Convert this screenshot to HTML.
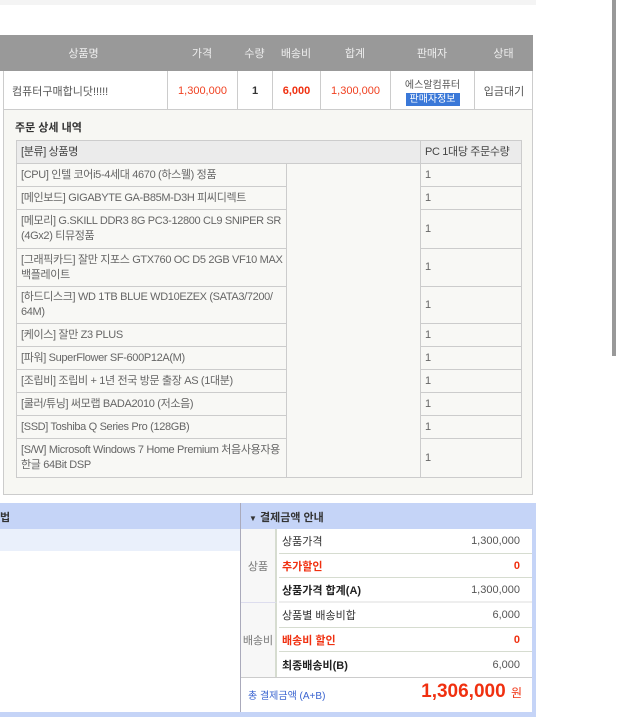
<!DOCTYPE html><html><head><meta charset="utf-8"><style>
*{margin:0;padding:0;box-sizing:border-box}
body{width:620px;height:724px;background:#fff;font-family:"Liberation Sans","Noto Sans CJK KR",sans-serif;position:relative;overflow:hidden;font-size:11px;color:#555}
.a{position:absolute}
.c{display:flex;align-items:center;justify-content:center;text-align:center}
.l{display:flex;align-items:center;padding-left:4px}
.hd{color:#eee;font-size:11px}
.cell{border:1px solid #ccc;background:#f8f8f5;color:#666;line-height:15px;letter-spacing:-0.35px}
</style></head><body>
<div class="a" style="left:0;top:0;width:536px;height:5px;background:#f4f4f4"></div>
<div class="a" style="left:612px;top:0;width:4px;height:356px;background:#999"></div>

<div class="a" style="left:0;top:35px;width:533px;height:36px;background:#999"></div>
<div class="a c hd" style="left:0;top:35px;width:167px;height:36px">상품명</div>
<div class="a c hd" style="left:167px;top:35px;width:70px;height:36px">가격</div>
<div class="a c hd" style="left:237px;top:35px;width:35px;height:36px">수량</div>
<div class="a c hd" style="left:272px;top:35px;width:48px;height:36px">배송비</div>
<div class="a c hd" style="left:320px;top:35px;width:70px;height:36px">합계</div>
<div class="a c hd" style="left:390px;top:35px;width:84px;height:36px">판매자</div>
<div class="a c hd" style="left:474px;top:35px;width:59px;height:36px">상태</div>

<div class="a" style="left:3px;top:71px;width:530px;height:39px;border-right:1px solid #ccc;border-bottom:1px solid #ccc;border-left:1px solid #ccc"></div>
<div class="a l" style="left:8px;top:71px;width:159px;height:39px;color:#555;padding-left:4px">컴퓨터구매합니닷!!!!!</div>
<div class="a c" style="left:167px;top:71px;width:70px;height:39px;border-left:1px solid #ccc;color:#f04020">1,300,000</div>
<div class="a c" style="left:237px;top:71px;width:35px;height:39px;border-left:1px solid #ccc;color:#333;font-weight:bold">1</div>
<div class="a c" style="left:272px;top:71px;width:48px;height:39px;border-left:1px solid #ccc;color:#f03010;font-weight:bold">6,000</div>
<div class="a c" style="left:320px;top:71px;width:70px;height:39px;border-left:1px solid #ccc;color:#f04020">1,300,000</div>
<div class="a" style="left:390px;top:71px;width:84px;height:39px;border-left:1px solid #ccc;text-align:center;padding-top:5px;font-size:10px;color:#555">에스알컴퓨터<br><span style="display:inline-block;margin-top:2px;background:#3a78d8;color:#fff;padding:0 4px;line-height:13px">판매자정보</span></div>
<div class="a c" style="left:474px;top:71px;width:59px;height:39px;border-left:1px solid #ccc;color:#555">입금대기</div>

<div class="a" style="left:3px;top:110px;width:530px;height:385px;background:#f7f7f3;border:1px solid #ccc;border-top:none"></div>
<div class="a" style="left:15px;top:119px;font-weight:bold;color:#333;font-size:11px">주문 상세 내역</div>
<div class="a l cell" style="left:16px;top:140px;width:406px;height:24px;background:#ebebeb;color:#444">[분류] 상품명</div>
<div class="a l cell" style="left:420px;top:140px;width:102px;height:24px;background:#ebebeb;color:#444">PC 1대당 주문수량</div>
<div class="a cell" style="left:286px;top:163px;width:135px;height:315px"></div>

<div class="a l cell" style="left:16px;top:163px;width:271px;height:24px">[CPU] 인텔 코어i5-4세대 4670 (하스웰) 정품</div>
<div class="a l cell" style="left:16px;top:186px;width:271px;height:24px">[메인보드] GIGABYTE GA-B85M-D3H 피씨디렉트</div>
<div class="a l cell" style="left:16px;top:209px;width:271px;height:40px">[메모리] G.SKILL DDR3 8G PC3-12800 CL9 SNIPER SR (4Gx2) 티뮤정품</div>
<div class="a l cell" style="left:16px;top:248px;width:271px;height:39px">[그래픽카드] 잘만 지포스 GTX760 OC D5 2GB VF10 MAX 백플레이트</div>
<div class="a l cell" style="left:16px;top:286px;width:271px;height:38px">[하드디스크] WD 1TB BLUE WD10EZEX (SATA3/7200/ 64M)</div>
<div class="a l cell" style="left:16px;top:323px;width:271px;height:24px">[케이스] 잘만 Z3 PLUS</div>
<div class="a l cell" style="left:16px;top:346px;width:271px;height:24px">[파워] SuperFlower SF-600P12A(M)</div>
<div class="a l cell" style="left:16px;top:369px;width:271px;height:24px">[조립비] 조립비 + 1년 전국 방문 출장 AS (1대분)</div>
<div class="a l cell" style="left:16px;top:392px;width:271px;height:24px">[쿨러/튜닝] 써모랩 BADA2010 (저소음)</div>
<div class="a l cell" style="left:16px;top:415px;width:271px;height:24px">[SSD] Toshiba Q Series Pro (128GB)</div>
<div class="a l cell" style="left:16px;top:438px;width:271px;height:40px">[S/W] Microsoft Windows 7 Home Premium 처음사용자용 한글 64Bit DSP</div>

<div class="a l cell" style="left:420px;top:163px;width:102px;height:24px">1</div>
<div class="a l cell" style="left:420px;top:186px;width:102px;height:24px">1</div>
<div class="a l cell" style="left:420px;top:209px;width:102px;height:40px">1</div>
<div class="a l cell" style="left:420px;top:248px;width:102px;height:39px">1</div>
<div class="a l cell" style="left:420px;top:286px;width:102px;height:38px">1</div>
<div class="a l cell" style="left:420px;top:323px;width:102px;height:24px">1</div>
<div class="a l cell" style="left:420px;top:346px;width:102px;height:24px">1</div>
<div class="a l cell" style="left:420px;top:369px;width:102px;height:24px">1</div>
<div class="a l cell" style="left:420px;top:392px;width:102px;height:24px">1</div>
<div class="a l cell" style="left:420px;top:415px;width:102px;height:24px">1</div>
<div class="a l cell" style="left:420px;top:438px;width:102px;height:40px">1</div>

<div class="a" style="left:0;top:503px;width:536px;height:214px;background:#c5d4f7"></div>
<div class="a" style="left:0;top:529px;width:240px;height:183px;background:#fff"></div>
<div class="a" style="left:0;top:529px;width:240px;height:22px;background:#eaf0fb"></div>
<div class="a" style="left:0;top:509px;font-weight:bold;color:#333">법</div>
<div class="a" style="left:240px;top:503px;width:1px;height:209px;background:#aab"></div>
<div class="a" style="left:249px;top:509px;font-weight:bold;color:#333"><span style="font-size:8px">▼</span> 결제금액 안내</div>
<div class="a" style="left:241px;top:529px;width:291px;height:183px;background:#fff"></div>
<div class="a c" style="left:241px;top:529px;width:36px;height:74px;background:#f7f7f7;color:#777;border-right:2px solid #d6dcd0;border-bottom:1px solid #dde">상품</div>
<div class="a c" style="left:241px;top:603px;width:36px;height:74px;background:#f7f7f7;color:#777;border-right:2px solid #d6dcd0">배송비</div>
<div class="a" style="left:241px;top:677px;width:291px;height:1px;background:#ccc"></div>

<div class="a" style="left:279px;top:529px;width:253px;height:148px;font-size:11px">
 <div style="height:25px;display:flex;align-items:center;justify-content:space-between;padding:0 12px 0 3px;border-bottom:1px solid #d6dcd0;color:#333"><span>상품가격</span><span style="color:#555">1,300,000</span></div>
 <div style="height:24px;display:flex;align-items:center;justify-content:space-between;padding:0 12px 0 3px;border-bottom:1px solid #d6dcd0;color:#f03010;font-weight:bold"><span>추가할인</span><span>0</span></div>
 <div style="height:25px;display:flex;align-items:center;justify-content:space-between;padding:0 12px 0 3px;border-bottom:2px solid #eee;color:#222;font-weight:bold"><span>상품가격 합계(A)</span><span style="color:#555;font-weight:normal">1,300,000</span></div>
 <div style="height:25px;display:flex;align-items:center;justify-content:space-between;padding:0 12px 0 3px;border-bottom:1px solid #d6dcd0;color:#333"><span>상품별 배송비합</span><span style="color:#555">6,000</span></div>
 <div style="height:24px;display:flex;align-items:center;justify-content:space-between;padding:0 12px 0 3px;border-bottom:1px solid #d6dcd0;color:#f03010;font-weight:bold"><span>배송비 할인</span><span>0</span></div>
 <div style="height:25px;display:flex;align-items:center;justify-content:space-between;padding:0 12px 0 3px;color:#222;font-weight:bold"><span>최종배송비(B)</span><span style="color:#555;font-weight:normal">6,000</span></div>
</div>
<div class="a" style="left:248px;top:687px;color:#3a64d0;font-size:10px">총 결제금액 (A+B)</div>
<div class="a" style="right:98px;top:681px;color:#f03010;font-size:19px;font-weight:bold">1,306,000 <span style="font-size:12px;font-weight:normal">원</span></div>
</body></html>
